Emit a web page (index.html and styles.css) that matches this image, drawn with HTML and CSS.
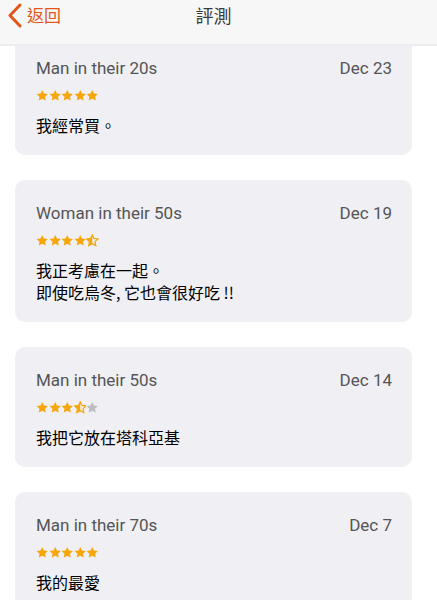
FILE: index.html
```html
<!DOCTYPE html>
<html lang="zh-Hant">
<head>
  <meta charset="UTF-8">
  <meta name="viewport" content="width=device-width, initial-scale=1.0">
  <title>評測</title>
  <link rel="stylesheet" href="styles.css">
</head>
<body>
  <svg width="0" height="0" class="defs">
    <defs>
      <path id="star" d="M12 1.2l3.3 6.9 7.5.9-5.5 5.2 1.4 7.5L12 18.1l-6.7 3.6 1.4-7.5L1.2 9l7.5-.9z"/>
      <clipPath id="half"><rect x="0" y="0" width="12" height="24"/></clipPath>
    </defs>
  </svg>

  <div class="topbar">
    <a class="back" href="#">
      <svg width="16" height="26" viewBox="0 0 16 26"><polyline points="13,3 3,13.5 13,24" fill="none" stroke="#e2561b" stroke-width="3" stroke-linecap="round" stroke-linejoin="round"/></svg>
      <span>返回</span>
    </a>
    <div class="title">評測</div>
    <div></div>
  </div>

  <div class="list">
    <div class="reviews">

      <div class="card">
        <div class="card-head"><span>Man in their 20s</span><span>Dec 23</span></div>
        <div class="stars">
          <svg viewBox="0 0 24 24"><use href="#star"/></svg>
          <svg viewBox="0 0 24 24"><use href="#star"/></svg>
          <svg viewBox="0 0 24 24"><use href="#star"/></svg>
          <svg viewBox="0 0 24 24"><use href="#star"/></svg>
          <svg viewBox="0 0 24 24"><use href="#star"/></svg>
        </div>
        <p class="text">我經常買。</p>
      </div>

      <div class="card">
        <div class="card-head"><span>Woman in their 50s</span><span>Dec 19</span></div>
        <div class="stars">
          <svg viewBox="0 0 24 24"><use href="#star"/></svg>
          <svg viewBox="0 0 24 24"><use href="#star"/></svg>
          <svg viewBox="0 0 24 24"><use href="#star"/></svg>
          <svg viewBox="0 0 24 24"><use href="#star"/></svg>
          <svg viewBox="0 0 24 24" class="half"><use href="#star" class="outline"/><use href="#star" clip-path="url(#half)"/></svg>
        </div>
        <p class="text">我正考慮在一起。<br>即使吃烏冬, 它也會很好吃 !!</p>
      </div>

      <div class="card">
        <div class="card-head"><span>Man in their 50s</span><span>Dec 14</span></div>
        <div class="stars">
          <svg viewBox="0 0 24 24"><use href="#star"/></svg>
          <svg viewBox="0 0 24 24"><use href="#star"/></svg>
          <svg viewBox="0 0 24 24"><use href="#star"/></svg>
          <svg viewBox="0 0 24 24" class="half"><use href="#star" class="outline"/><use href="#star" clip-path="url(#half)"/></svg>
          <svg viewBox="0 0 24 24" class="off"><use href="#star"/></svg>
        </div>
        <p class="text">我把它放在塔科亞基</p>
      </div>

      <div class="card">
        <div class="card-head"><span>Man in their 70s</span><span>Dec 7</span></div>
        <div class="stars">
          <svg viewBox="0 0 24 24"><use href="#star"/></svg>
          <svg viewBox="0 0 24 24"><use href="#star"/></svg>
          <svg viewBox="0 0 24 24"><use href="#star"/></svg>
          <svg viewBox="0 0 24 24"><use href="#star"/></svg>
          <svg viewBox="0 0 24 24"><use href="#star"/></svg>
        </div>
        <p class="text">我的最愛</p>
      </div>

    </div>
  </div>
</body>
</html>
```

FILE: styles.css
```css
  html, body {
    height: 100%;
  }
  body {
    font-family: Roboto, "Noto Sans CJK TC", sans-serif;
    margin: 0;
    background-color: #fff;
    color: #333;
    display: flex;
    flex-direction: column;
    overflow: hidden;
  }
  .defs {
    position: absolute;
  }

  .topbar {
    height: 44px;
    flex: none;
    background-color: #f7f7f8;
    border-bottom: 2px solid #ededef;
    display: grid;
    grid-template-columns: 1fr auto 1fr;
    align-items: start;
    padding-right: 10px;
    position: relative;
    z-index: 1;
  }
  .back {
    display: flex;
    align-items: center;
    gap: 4px;
    padding: 2px 0 0 7px;
    color: #e2561b;
    text-decoration: none;
    font-family: "Noto Sans CJK TC", sans-serif;
    font-size: 17px;
    line-height: 26px;
  }
  .title {
    font-family: "Noto Sans CJK TC", sans-serif;
    font-size: 18px;
    line-height: 30px;
    color: #3a3a3a;
  }

  .list {
    flex: 1;
    overflow: hidden;
  }
  .reviews {
    margin-top: -11px;
    padding: 0 25px 0 15px;
    display: flex;
    flex-direction: column;
    gap: 25px;
  }
  .card {
    background-color: #efeff4;
    border-radius: 10px;
    padding: 21px 20px 19px 21px;
  }
  .card-head {
    display: flex;
    justify-content: space-between;
    font-size: 17px;
    line-height: 24px;
    color: #555;
  }
  .stars {
    display: flex;
    gap: 0;
    margin-top: 9px;
    height: 13px;
  }
  .stars svg {
    width: 12.5px;
    height: 13px;
    fill: #f6a609;
  }
  .stars .off {
    fill: #bcbcc2;
  }
  .stars .outline {
    fill: none;
    stroke: #f6a609;
    stroke-width: 2.4;
  }
  .text {
    margin: 12px 0 0;
    font-family: "Noto Sans CJK TC", sans-serif;
    font-size: 16px;
    line-height: 22px;
    color: #000;
  }
```
